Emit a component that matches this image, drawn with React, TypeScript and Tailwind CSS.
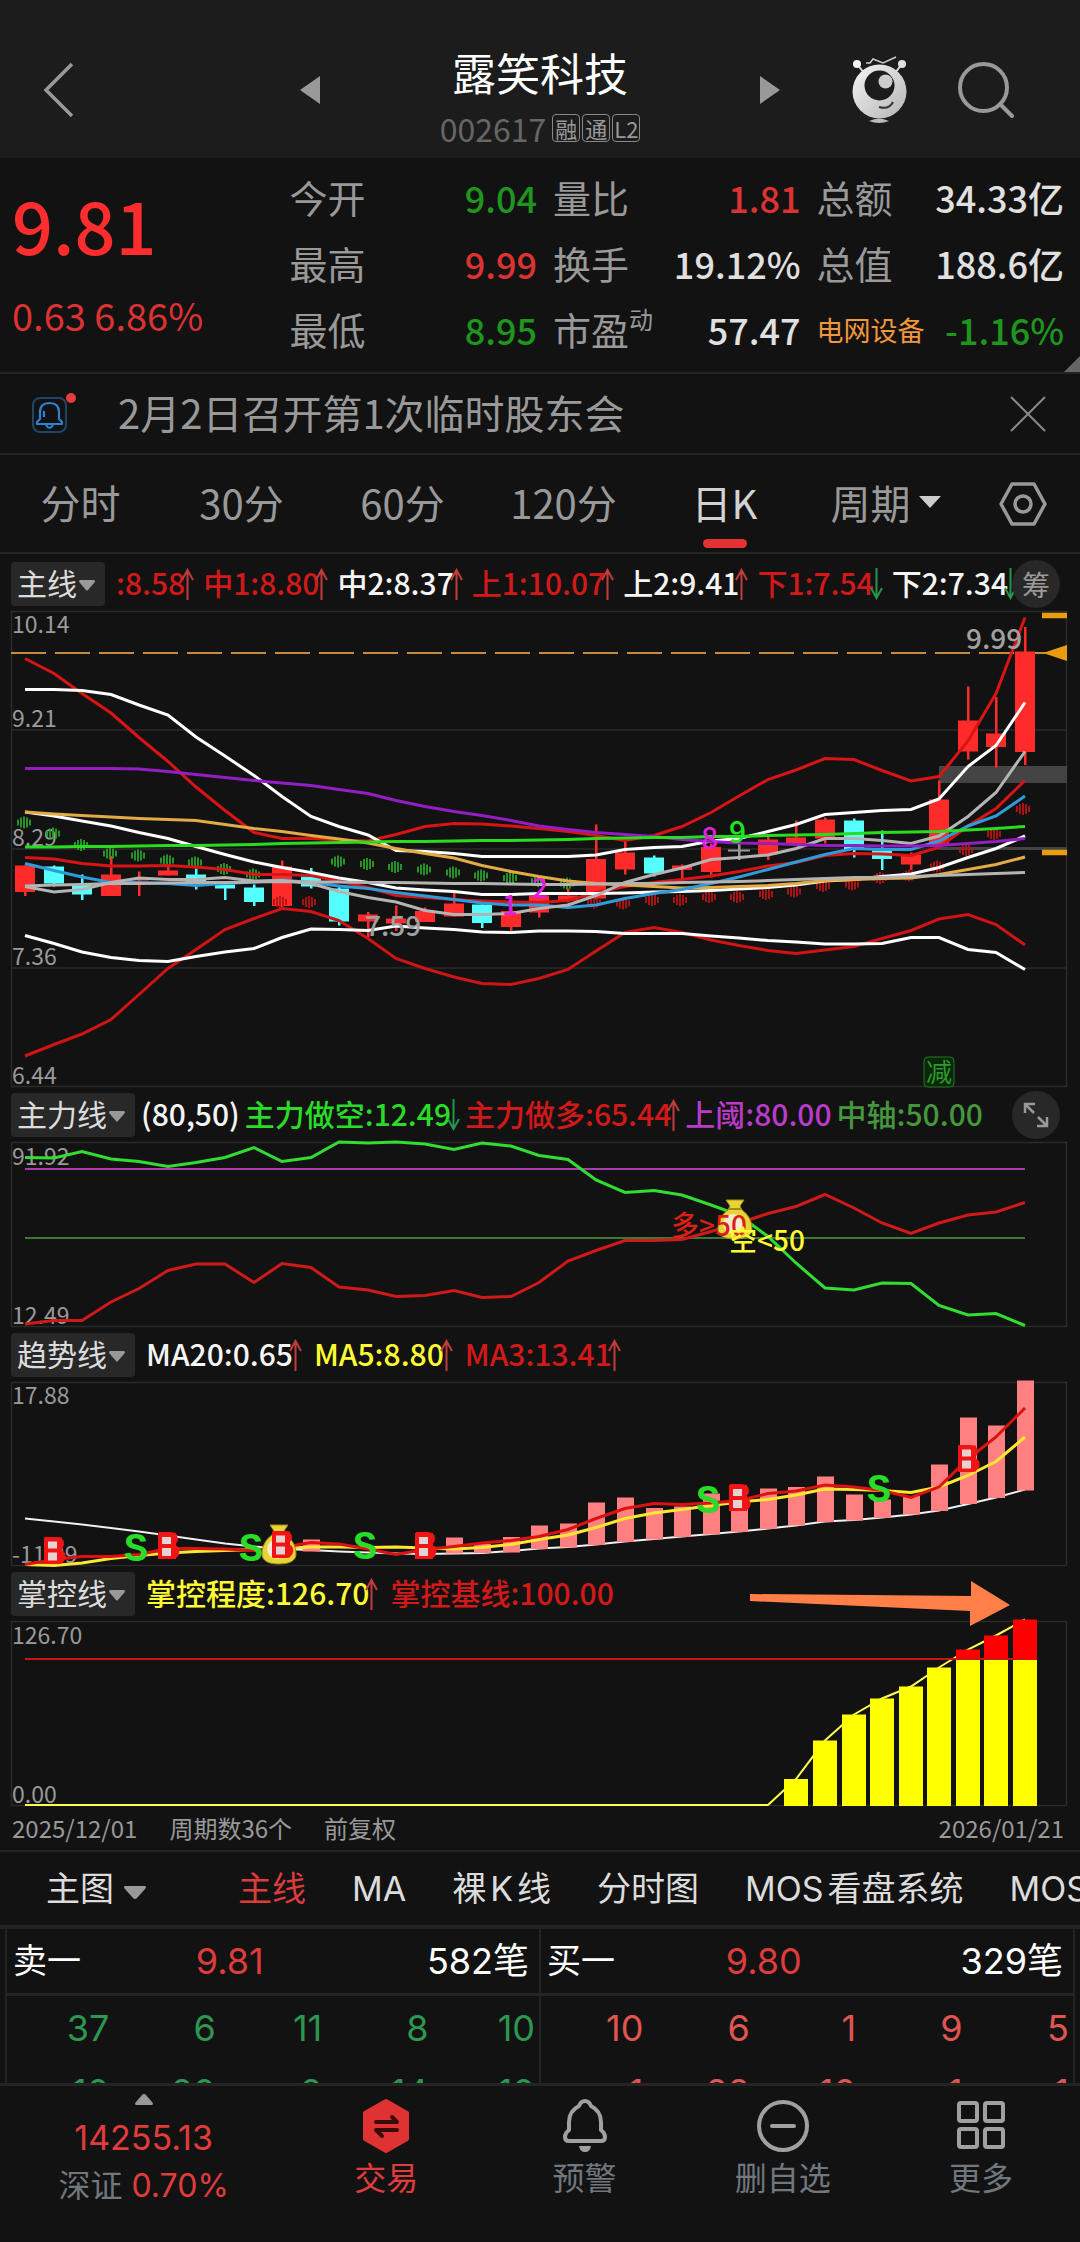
import React from "react";

const FONT = "font-['Noto_Sans_CJK_SC','Noto_Sans',sans-serif]";
const ROUND_FONT = "font-['Inter','Noto_Sans_CJK_SC',sans-serif]";

/* ---------- chart helpers ---------- */

const STEP = 1000 / 35;
const X0 = 14;
const cx = (i: number) => Math.round(X0 + STEP * i);
// Samples are stored at three units per pixel, measured from `base`.
const cy = (v: number, base: number) => Math.round(((v - base) / 3) * 2) / 2;

function Line({ data, base, color, width = 3 }: { data: number[]; base: number; color: string; width?: number }) {
  return (
    <polyline
      points={data.map((v, i) => `${cx(i)},${cy(v, base)}`).join(" ")}
      fill="none"
      stroke={color}
      strokeWidth={width}
    />
  );
}

function Label({ x, y, size = 23, color = "#9a9a9a", children }: { x: number; y: number; size?: number; color?: string; children: React.ReactNode }) {
  return (
    <text x={x} y={y} fontSize={size} fill={color}>
      {children}
    </text>
  );
}

function Plot({ height, label, children }: { height: number; label: string; children: React.ReactNode }) {
  return (
    <div className="pl-[11px] pr-[13px]">
      <svg viewBox={`0 0 1056 ${height}`} className="block w-full overflow-visible" role="img" aria-label={label}>
        <rect x="0.5" y="0.5" width="1055" height={height - 1} fill="none" stroke="#2b2b2b" strokeWidth="1.5" />
        {children}
      </svg>
    </div>
  );
}

/* ---------- main chart data ---------- */

const UPPER_RED = [178, 222, 283, 341, 415, 487, 563, 634, 700, 718, 718, 722, 725, 706, 682, 672, 674, 680, 688, 697, 708, 724, 708, 682, 640, 590, 540, 512, 478, 481, 513, 545, 532, 425, 283, 55];
const UPPER_WHITE = [270, 271, 274, 286, 317, 347, 413, 470, 528, 592, 652, 682, 707, 754, 757, 762, 772, 772, 772, 772, 767, 751, 745, 742, 725, 718, 697, 676, 646, 639, 634, 631, 599, 501, 439, 310];
const PURPLE = [507, 507, 508, 508, 509, 516, 526, 535, 544, 551, 559, 570, 583, 603, 622, 636, 649, 664, 680, 691, 699, 705, 712, 720, 727, 731, 733, 736, 738, 738, 740, 740, 739, 733, 726, 717];
const ORANGE = [638, 644, 649, 653, 657, 660, 664, 675, 688, 697, 708, 719, 731, 748, 762, 776, 799, 816, 832, 845, 852, 857, 861, 866, 865, 862, 859, 853, 843, 840, 838, 836, 825, 811, 796, 773];
const MID_WHITE = [638, 650, 665, 680, 700, 718, 742, 765, 788, 804, 820, 836, 850, 866, 872, 877, 886, 886, 883, 883, 882, 881, 878, 876, 873, 869, 865, 857, 845, 840, 832, 824, 805, 775, 748, 710];
const GREEN = [743, 743, 742, 741, 740, 739, 738, 737, 735, 733, 731, 729, 728, 727, 726, 725, 724, 723, 722, 720, 718, 716, 715, 714, 712, 711, 709, 707, 705, 702, 700, 698, 696, 692, 688, 681];
const GRAY_FLAT = [860, 857, 855, 853, 852, 851, 850, 849, 848, 847, 848, 848, 849, 850, 851, 852, 853, 854, 855, 855, 854, 853, 852, 850, 848, 846, 843, 840, 838, 835, 834, 832, 828, 825, 823, 820];
const GRAY = [862, 878, 870, 850, 836, 840, 840, 835, 845, 843, 853, 877, 894, 908, 934, 945, 945, 943, 927, 917, 888, 850, 825, 806, 780, 775, 767, 748, 717, 718, 724, 732, 710, 652, 580, 457];
const BLUE = [793, 813, 833, 850, 850, 852, 859, 852, 848, 842, 850, 860, 868, 880, 890, 900, 911, 917, 917, 925, 917, 897, 883, 870, 852, 833, 810, 788, 765, 748, 750, 750, 725, 680, 650, 590];
const MID_RED = [774, 779, 793, 800, 800, 799, 803, 811, 826, 826, 828, 845, 865, 889, 895, 900, 905, 908, 910, 904, 880, 862, 850, 840, 830, 817, 800, 790, 768, 763, 764, 769, 745, 680, 628, 543];
const LOWER_WHITE = [1008, 1033, 1058, 1074, 1083, 1087, 1072, 1058, 1047, 1015, 989, 991, 993, 980, 986, 991, 998, 1000, 995, 995, 997, 1003, 1003, 1003, 1010, 1016, 1023, 1028, 1034, 1034, 1033, 1015, 1014, 1051, 1059, 1111];
const LOWER_RED = [1370, 1336, 1304, 1260, 1185, 1108, 1050, 990, 958, 928, 937, 963, 1018, 1077, 1108, 1133, 1152, 1155, 1138, 1111, 1055, 1000, 984, 1000, 1022, 1038, 1054, 1062, 1052, 1042, 1018, 994, 959, 945, 975, 1037];

// [high, body top, body bottom, low, kind]
const CANDLES: [number, number, number, number, "r" | "c" | "d"][] = [
  [798, 798, 878, 890, "r"], [798, 801, 852, 862, "c"], [825, 855, 886, 902, "c"], [770, 825, 890, 890, "r"],
  [817, 837, 844, 890, "r"], [795, 813, 829, 829, "r"], [808, 825, 850, 870, "c"], [848, 855, 867, 902, "c"],
  [855, 864, 908, 920, "c"], [783, 802, 920, 925, "r"], [806, 832, 862, 868, "c"], [862, 867, 966, 978, "c"],
  [938, 945, 967, 1015, "r"], [918, 957, 972, 995, "r"], [925, 935, 968, 968, "r"], [879, 912, 952, 952, "r"],
  [915, 915, 971, 986, "c"], [930, 935, 983, 998, "r"], [880, 888, 940, 955, "r"], [868, 888, 903, 910, "r"],
  [675, 779, 897, 900, "r"], [727, 759, 810, 825, "r"], [768, 774, 822, 832, "c"], [795, 798, 812, 840, "r"],
  [733, 743, 818, 835, "r"], [727, 750, 757, 782, "d"], [705, 720, 766, 782, "r"], [663, 714, 735, 740, "r"],
  [655, 660, 717, 732, "r"], [658, 663, 752, 774, "c"], [693, 754, 779, 812, "c"], [760, 766, 795, 812, "r"],
  [543, 601, 738, 738, "r"], [262, 363, 456, 480, "r"], [293, 402, 443, 504, "r"], [83, 157, 458, 497, "r"],
];
const CANDLE_COLOR = { r: "#ff2a2a", c: "#55ffff", d: "#999999" };

const GREEN_DOTS: [number, number][] = [
  [0, 670], [1, 703], [2, 737], [3, 762], [4, 769], [5, 784], [6, 790], [7, 809], [8, 825],
  [11, 786], [12, 794], [13, 803], [14, 811], [15, 820], [16, 828], [17, 836], [18, 845], [19, 852],
];
const RED_DOTS: [number, number][] = [
  [9, 908], [10, 908], [20, 910], [21, 912], [22, 902], [23, 902], [24, 893], [25, 893], [26, 884], [27, 877],
  [28, 860], [29, 855], [30, 836], [31, 828], [32, 801], [33, 752], [34, 704], [35, 629],
];

function HatchDot({ x, y, color }: { x: number; y: number; color: string }) {
  return (
    <path
      d={`M${x - 6} ${y - 3}v6M${x - 3} ${y - 5}v10M${x} ${y - 6}v12M${x + 3} ${y - 5}v10M${x + 6} ${y - 3}v6`}
      stroke={color}
      strokeWidth="1.8"
    />
  );
}

function MainChart() {
  const b = 35;
  return (
    <Plot height={476} label="日K线图">
      <path d="M0 119H1056M0 238H1056M0 357H1056" stroke="#2b2b2b" strokeWidth="1.5" />
      <rect x="928" y="236" width="128" height="3" fill="#444" />
      <rect x="928" y="155" width="128" height="17" fill="#444" />
      <path d="M0 42H1056" stroke="#c98a3e" strokeWidth="2" strokeDasharray="35 9" />
      <path d="M1032 42L1056 34V50Z" fill="#e89c10" />
      <path d="M1031 4.500H1056M1031 241.500H1056" stroke="#e89c10" strokeWidth="5.500" />
      <Label x={1} y={22}>10.14</Label>
      <Label x={1} y={116}>9.21</Label>
      <Label x={1} y={235}>8.29</Label>
      <Label x={1} y={354}>7.36</Label>
      <Label x={1} y={473}>6.44</Label>
      {CANDLES.map(([h, t, bt, l, k], i) => {
        const half = k === "d" ? 11 : 10;
        return (
          <g key={i} fill={CANDLE_COLOR[k]}>
            <rect x={cx(i) - 1} y={cy(h, b)} width="2.500" height={cy(l, b) - cy(h, b)} />
            <rect x={cx(i) - half} y={cy(t, b)} width={half * 2} height={Math.max(2, cy(bt, b) - cy(t, b))} />
          </g>
        );
      })}
      {GREEN_DOTS.map(([i, v]) => <HatchDot key={i} x={cx(i) - 1} y={cy(v, b)} color="#2aa02a" />)}
      {RED_DOTS.map(([i, v]) => <HatchDot key={i} x={cx(i) - 2} y={cy(v, b)} color="#b81414" />)}
      <Line data={UPPER_RED} base={b} color="#d81414" />
      <Line data={LOWER_RED} base={b} color="#d01414" />
      <Line data={UPPER_WHITE} base={b} color="#ffffff" />
      <Line data={LOWER_WHITE} base={b} color="#ffffff" />
      <Line data={MID_RED} base={b} color="#d81414" />
      <Line data={MID_WHITE} base={b} color="#ffffff" />
      <Line data={ORANGE} base={b} color="#e3ab45" />
      <Line data={BLUE} base={b} color="#2f9bd8" />
      <Line data={GRAY} base={b} color="#b4b4b4" />
      <Line data={GRAY_FLAT} base={b} color="#b4b4b4" />
      <Line data={PURPLE} base={b} color="#931ec4" />
      <Line data={GREEN} base={b} color="#28dc1e" />
      <g fontWeight="500">
        <Label x={955} y={38} size={28} color="#a0a0a0">9.99</Label>
        <Label x={354} y={325} size={28} color="#a0a0a0">7.59</Label>
        <Label x={491} y={304} size={28} color="#e01ee0">1</Label>
        <Label x={521} y={287} size={28} color="#e01ee0">2</Label>
        <Label x={690} y={238} size={30} color="#e01ee0">8</Label>
        <Label x={718} y={232} size={30} color="#1ee61e">9</Label>
      </g>
      <rect x="913" y="446" width="30" height="30" rx="4" fill="#0c260c" stroke="#1f7a1f" />
      <Label x={915} y={471} size={26} color="#2a9a2a">减</Label>
    </Plot>
  );
}

/* ---------- indicator charts ---------- */

const SHORT_POWER = [234, 235, 216, 238, 246, 261, 248, 233, 203, 245, 233, 187, 190, 187, 193, 210, 190, 199, 227, 240, 301, 339, 332, 346, 376, 406, 470, 550, 625, 631, 610, 611, 677, 706, 701, 737];
const LONG_POWER = [733, 723, 723, 667, 626, 572, 553, 553, 609, 552, 563, 622, 631, 650, 648, 633, 654, 650, 608, 544, 512, 483, 483, 479, 456, 430, 402, 381, 345, 385, 430, 461, 430, 406, 397, 368];

function MoneyBag({ x, y }: { x: number; y: number }) {
  return (
    <g>
      <path
        d={`M${x - 9} ${y}h18l-4 6 2 4c7 5 10 12 10 19 0 7-7 10-17 10s-17-3-17-10c0-7 3-14 10-19l2-4Z`}
        fill="#e8d432"
        stroke="#a08a20"
      />
      <ellipse cx={x - 2} cy={y + 24} rx="10" ry="10" fill="#f8ead0" />
      <path d={`M${x - 6} ${y + 9}h12`} stroke="#a08a20" strokeWidth="2" />
    </g>
  );
}

function PowerChart() {
  return (
    <Plot height={185} label="主力线">
      <Label x={1} y={23}>91.92</Label>
      <Label x={1} y={182}>12.49</Label>
      <path d="M14 27H1014" stroke="#a83cb0" strokeWidth="2" />
      <path d="M14 96H1014" stroke="#3c7a34" strokeWidth="2" />
      <Line data={LONG_POWER} base={187} color="#d01919" />
      <Line data={SHORT_POWER} base={187} color="#32dc32" />
      <MoneyBag x={724} y={58} />
      <g fontWeight="500">
        <Label x={660} y={94} size={28} color="#dc1e14">多&gt;50</Label>
        <Label x={718} y={109} size={28} color="#fffa32">空&lt;50</Label>
      </g>
    </Plot>
  );
}

const MA20 = [564, 574, 583, 593, 604, 615, 627, 639, 649, 656, 659, 663, 666, 670, 671, 670, 668, 662, 655, 650, 642, 633, 626, 619, 611, 604, 595, 586, 574, 569, 562, 553, 541, 521, 502, 478];
const MA5 = [703, 705, 698, 684, 675, 668, 663, 660, 657, 655, 650, 650, 652, 650, 653, 656, 652, 642, 628, 614, 592, 565, 548, 538, 526, 515, 508, 494, 476, 478, 480, 486, 470, 436, 393, 320];
const MA3 = [703, 688, 679, 679, 672, 654, 654, 656, 660, 652, 636, 641, 656, 672, 658, 648, 638, 630, 618, 597, 565, 535, 520, 523, 518, 510, 490, 482, 464, 470, 480, 501, 470, 386, 320, 233];
const TREND_BARS: [number, number, number][] = [
  [10, 628, 663], [15, 621, 670], [16, 640, 668], [17, 620, 666], [18, 586, 656], [19, 580, 651], [20, 516, 644],
  [21, 502, 635], [22, 533, 627], [23, 528, 620], [24, 490, 612], [25, 505, 605], [26, 475, 596], [27, 470, 586],
  [28, 438, 575], [29, 492, 570], [30, 507, 563], [31, 497, 553], [32, 402, 542], [33, 262, 521], [34, 286, 503],
  [35, 151, 480],
];
const BUYS: [number, number][] = [[1, 660], [5, 647], [9, 642], [14, 647], [25, 503], [33, 385]];
const SELLS: [number, number][] = [[4, 653], [8, 651], [12, 646], [24, 509], [30, 476]];

function TrendChart() {
  const b = 155;
  return (
    <Plot height={184} label="趋势线">
      <Label x={1} y={22}>17.88</Label>
      <Label x={1} y={181}>-11.39</Label>
      <Line data={MA20} base={b} color="#f0f0f0" width={2} />
      {TREND_BARS.map(([i, t, bt]) => (
        <rect key={i} x={cx(i) - 8} y={cy(t, b)} width="17" height={cy(bt, b) - cy(t, b)} fill="#ff8080" />
      ))}
      <Line data={MA5} base={b} color="#ffe632" />
      <Line data={MA3} base={b} color="#dc1212" />
      <MoneyBag x={268} y={143} />
      <g fontFamily="'Liberation Mono', monospace" fontWeight="700" fontSize="40" textAnchor="middle">
        {SELLS.map(([i, v]) => (
          <text key={i} x={cx(i) - 3} y={cy(v, b) + 13} fill="#28dc28">S</text>
        ))}
        {BUYS.map(([i, v]) => (
          <g key={i}>
            <rect x={cx(i) - 10} y={cy(v, b) - 13} width="18" height="26" fill="#f01414" />
            <text x={cx(i)} y={cy(v, b) + 13} fill="#f01414">B</text>
            <path d={`M${cx(i) - 6} ${cy(v, b) - 9}h9v7h-9ZM${cx(i) - 6} ${cy(v, b) + 2}h9v8h-9Z`} fill="#e6d2d2" />
          </g>
        ))}
      </g>
    </Plot>
  );
}

const CONTROL_TOPS = [626, 510, 432, 384, 348, 292, 238, 195, 148];

function ControlChart() {
  const b = 152;
  const points = ["14,184", `${cx(26)},184`, ...CONTROL_TOPS.map((v, k) => `${cx(27 + k)},${cy(v, b)}`)].join(" ");
  return (
    <Plot height={185} label="掌控线">
      <Label x={1} y={23}>126.70</Label>
      <Label x={1} y={182}>0.00</Label>
      <polyline points={points} fill="none" stroke="#ffff50" strokeWidth="2" />
      {CONTROL_TOPS.map((v, k) => {
        const top = cy(v, b);
        const y = Math.max(top, 39);
        return (
          <g key={k}>
            <rect x={cx(27 + k) - 12} y={y} width="24" height={185 - y} fill="#ffff00" />
            {top < 39 && <rect x={cx(27 + k) - 12} y={top} width="24" height={39 - top} fill="#ff0000" />}
          </g>
        );
      })}
      <path d="M14 38H1014" stroke="#c81414" strokeWidth="2" />
      <path d="M739 -27L960 -25V-40L999 -16L959 5V-10L739 -20Z" fill="#ff7f48" />
    </Plot>
  );
}

/* ---------- legends ---------- */

type Item = { text: string; color: string; arrow?: "up" | "down" };

function Arrow({ dir }: { dir: "up" | "down" }) {
  return (
    <svg viewBox="0 0 13 32" className="-ml-1 mt-1 h-8 w-[13px] shrink-0" fill="none" strokeWidth="2" aria-hidden="true">
      {dir === "up" ? <path d="M6.500 32V2M1 12L6.500 2L12 12" stroke="#c03c3c" /> : <path d="M6.500 0V30M1 20L6.500 30L12 20" stroke="#23964b" />}
    </svg>
  );
}

function Legend({ name, items, gap = "gap-3", children }: { name: string; items: Item[]; gap?: string; children?: React.ReactNode }) {
  return (
    <div className="relative flex h-[55px] items-center pl-[11px] text-[30px] leading-none">
      <button className="flex h-11 shrink-0 items-center rounded bg-[#282828] pb-1 pl-1.5 pr-2.5 text-[#dcdcdc]">
        {name}
        <svg viewBox="0 0 16 11" className="ml-0.5 mt-2 h-[11px] w-4" fill="#999" aria-hidden="true">
          <path d="M1 0H15Q17 1 15 3L9 10Q8 11 7 10L1 3Q-1 1 1 0Z" />
        </svg>
      </button>
      <div className={`flex min-w-0 flex-1 items-center overflow-hidden whitespace-nowrap pb-1 leading-[44px] ${gap} ${name === "主力线" ? "pl-1.5" : "pl-[11px]"}`}>
        {items.map((it) => (
          <span key={it.text} className={`flex items-center font-medium ${it.color}`}>
            {it.text}
            {it.arrow && <Arrow dir={it.arrow} />}
          </span>
        ))}
      </div>
      {children}
    </div>
  );
}

const RED = "text-[#d21919]";
const WHITE = "text-[#f5f5f5]";

/* ---------- header ---------- */

function Header() {
  return (
    <header className="grid h-[158px] grid-cols-[300fr_480fr_300fr] items-center bg-[#1c1c1c] pt-[22px]">
      <button aria-label="返回" className="w-min pl-[42px]">
        <svg viewBox="0 0 32 56" className="h-14 w-8" fill="none" stroke="#999" strokeWidth="3.500">
          <path d="M30 2L4 28L30 54" />
        </svg>
      </button>
      <div className="flex items-center justify-between">
        <button aria-label="上一只">
          <svg viewBox="0 0 20 28" className="h-7 w-5" fill="#999"><path d="M20 0V28L0 14Z" /></svg>
        </button>
        <div className="flex flex-col items-center pt-2.5">
          <h1 className="text-[44px] leading-[52px] text-white">露笑科技</h1>
          <div className="mt-3.5 flex items-center gap-0.5 text-[22px] leading-none text-[#999]">
            <span className="mr-1 text-[32px] text-[#666]">002617</span>
            <span className="flex size-7 items-center justify-center rounded-sm border border-[#888]">融</span>
            <span className="flex size-7 items-center justify-center rounded-sm border border-[#888]">通</span>
            <span className="flex size-7 items-center justify-center rounded-sm border border-[#888]">L2</span>
          </div>
        </div>
        <button aria-label="下一只">
          <svg viewBox="0 0 20 28" className="h-7 w-5" fill="#999"><path d="M0 0V28L20 14Z" /></svg>
        </button>
      </div>
      <div className="flex items-center gap-[50px] pl-[72px]">
        <button aria-label="助手">
          <svg viewBox="0 0 56 68" className="h-[68px] w-14" aria-hidden="true">
            <defs>
              <linearGradient id="body" x1="0" y1="0" x2="1" y2="1">
                <stop offset="0" stopColor="#f5f5f5" />
                <stop offset="1" stopColor="#b4b4b4" />
              </linearGradient>
            </defs>
            <path d="M5 8L12 17M50 8L43 17" stroke="#ddd" strokeWidth="2" />
            <circle cx="5" cy="8" r="4" fill="#f5f5f5" />
            <circle cx="50" cy="8" r="4" fill="#e0e0e0" />
            <path d="M14 7H18L21 3L31 7L44 1" fill="none" stroke="#ccc" strokeWidth="1.500" />
            <circle cx="27.500" cy="35.500" r="27" fill="url(#body)" />
            <circle cx="27.500" cy="29.500" r="15" fill="#1c1c1c" />
            <circle cx="33.500" cy="25.500" r="7" fill="#ccc" />
            <path d="M27 51Q37 54 41 46" fill="none" stroke="#333" strokeWidth="2" />
            <path d="M17 65Q27 60 37 65Q27 69 17 65Z" fill="#bbb" />
          </svg>
        </button>
        <button aria-label="搜索">
          <svg viewBox="0 0 56 56" className="size-14" fill="none" stroke="#999" strokeWidth="4" strokeLinecap="round">
            <circle cx="25.500" cy="25.500" r="23.500" />
            <path d="M42 42L54 54" />
          </svg>
        </button>
      </div>
    </header>
  );
}

function Stat({ label, sup, value, color, small }: { label: string; sup?: string; value: string; color: string; small?: boolean }) {
  return (
    <div className="flex h-[66px] items-center justify-between whitespace-nowrap">
      <dt className={small ? "text-[27px] text-[#f0963c]" : "text-[38px] text-[#999]"}>
        {label}
        {sup && <sup className="relative -top-4 align-middle text-[24px]">{sup}</sup>}
      </dt>
      <dd className={`text-[36px] font-medium ${color}`}>{value}</dd>
    </div>
  );
}

const UP = "text-[#dc3232]";
const DOWN = "text-[#1e961e]";
const PLAIN = "text-[#e0e0e0]";

function Quote() {
  return (
    <section className="relative flex h-[216px] border-b-2 border-[#242424] pl-3 pr-4 pt-1.5 leading-none">
      <div className="flex-[278] pt-6">
        <div className="text-[72px] font-medium leading-[72px] text-[#ff2d2d]">9.81</div>
        <div className="mt-9 text-[38px] text-[#dc3232]">0.63 6.86%</div>
      </div>
      <dl className="grid flex-[776] grid-cols-3 content-start gap-x-4">
        <Stat label="今开" value="9.04" color={DOWN} />
        <Stat label="量比" value="1.81" color={UP} />
        <Stat label="总额" value="34.33亿" color={PLAIN} />
        <Stat label="最高" value="9.99" color={UP} />
        <Stat label="换手" value="19.12%" color={PLAIN} />
        <Stat label="总值" value="188.6亿" color={PLAIN} />
        <Stat label="最低" value="8.95" color={DOWN} />
        <Stat label="市盈" sup="动" value="57.47" color={PLAIN} />
        <Stat label="电网设备" value="-1.16%" color={DOWN} small />
      </dl>
      <svg viewBox="0 0 16 16" className="absolute bottom-0 right-0 size-4" fill="#666" aria-hidden="true"><path d="M16 0V16H0Z" /></svg>
    </section>
  );
}

function Notice() {
  return (
    <section className="flex h-[81px] items-center border-b-2 border-[#242424] pl-8 pr-[34px]">
      <svg viewBox="0 0 44 44" className="size-11 shrink-0" fill="none" aria-hidden="true">
        <rect x="1" y="6" width="33" height="34" rx="7" stroke="#1f4668" strokeWidth="2" />
        <path d="M5 32H30V30L27 27V20Q27 11 17.500 11Q8 11 8 20V27L5 30ZM12 19V25M14 33Q17.500 39 21 33" stroke="#2d82d2" strokeWidth="2.200" strokeLinejoin="round" />
        <circle cx="39" cy="6" r="5" fill="#e63c3c" />
      </svg>
      <p className="ml-[42px] flex-1 pb-1 text-[40px] leading-none text-[#999]">2月2日召开第1次临时股东会</p>
      <button aria-label="关闭">
        <svg viewBox="0 0 36 36" className="size-9" stroke="#888" strokeWidth="2"><path d="M1 1L35 35M35 1L1 35" /></svg>
      </button>
    </section>
  );
}

function PeriodTabs() {
  return (
    <nav className="flex h-[99px] items-stretch border-b-2 border-[#242424] text-[40px] leading-none text-[#999]">
      {["分时", "30分", "60分", "120分", "日K", "周期"].map((t) => (
        <button key={t} className={`relative flex flex-[161] items-center justify-center pb-1 ${t === "日K" ? "text-[#d2d2d2]" : ""}`}>
          {t}
          {t === "周期" && <svg viewBox="0 0 22 12" className="ml-2 h-3 w-[22px]" fill="#ccc" aria-hidden="true"><path d="M0 0H22L11 12Z" /></svg>}
          {t === "日K" && <span className="absolute bottom-1 left-1/2 h-[9px] w-11 -translate-x-1/2 rounded-full bg-[#e43232]" />}
        </button>
      ))}
      <button aria-label="设置" className="flex flex-[114] items-center justify-center">
        <svg viewBox="0 0 48 44" className="h-11 w-12" fill="none" stroke="#999" strokeWidth="3.500" strokeLinejoin="round">
          <path d="M13 2H35L46 22L35 42H13L2 22Z" />
          <circle cx="24" cy="22" r="8" />
        </svg>
      </button>
    </nav>
  );
}

/* ---------- lower sections ---------- */

function ChartSelector() {
  return (
    <nav className={`flex h-[77px] items-center gap-[46px] overflow-hidden whitespace-nowrap border-b-4 border-[#242424] pl-[46px] text-[34px] leading-[48px] text-[#dcdcdc] ${ROUND_FONT}`}>
      <button className="flex items-center gap-2.5">
        主图
        <svg viewBox="0 0 22 13" className="mt-2 h-[13px] w-[22px]" fill="#999" aria-hidden="true">
          <path d="M1 0H21Q23 1 21 3L13 12Q11 14 9 12L1 3Q-1 1 1 0Z" />
        </svg>
      </button>
      <span className="h-10 w-0.5 bg-[#2a2a2a]" />
      <button className="text-[#dc3c3c]">主线</button>
      <button>MA</button>
      <button>裸<span className="mx-1">K</span>线</button>
      <button>分时图</button>
      <button><span className="mr-1">MOS</span>看盘系统</button>
      <button>MOS</button>
    </nav>
  );
}

function BookSide({ name, price, count, rows, color }: { name: string; price: string; count: string; rows: string[][]; color: string }) {
  return (
    <div className="min-w-0 flex-1 border-l-2 border-[#242424]">
      <div className="grid h-[67px] grid-cols-[26fr_32fr_42fr] items-center border-b-[3px] border-[#242424] pl-1.5 pr-2.5 text-[34px] text-white">
        <span>{name}</span>
        <span className="text-center text-[36px] text-[#dc3c3c]">{price}</span>
        <span className="text-right text-[36px]">{count}</span>
      </div>
      <table className={`w-full table-fixed text-[36px] ${color}`}>
        <tbody>
          {rows.map((r, i) => (
            <tr key={i} className="h-16">
              {r.map((v, j) => <td key={j} className="p-0 pr-1 text-right">{v}</td>)}
            </tr>
          ))}
        </tbody>
      </table>
    </div>
  );
}

function OrderBook() {
  return (
    <section className={`flex h-[154px] overflow-hidden pl-[5px] leading-none ${ROUND_FONT}`}>
      <BookSide name="卖一" price="9.81" count="582笔" color="text-[#2d9650]" rows={[["37", "6", "11", "8", "10"], ["10", "20", "2", "14", "10"]]} />
      <BookSide name="买一" price="9.80" count="329笔" color="text-[#e15550]" rows={[["10", "6", "1", "9", "5"], ["1", "22", "10", "1", "1"]]} />
      <div className="w-[7px] border-l-2 border-[#242424]" />
    </section>
  );
}

function NavItem({ label, active, children }: { label: string; active?: boolean; children: React.ReactNode }) {
  return (
    <button className={`flex flex-[198] flex-col items-center gap-2.5 pt-[11px] ${active ? "text-[#e03c3c]" : "text-[#70777d]"}`}>
      <svg viewBox="0 0 56 56" className="size-14" fill="none" stroke="#a0a0a0" strokeWidth="4" strokeLinecap="round" strokeLinejoin="round" aria-hidden="true">
        {children}
      </svg>
      <span className="leading-[32px]">{label}</span>
    </button>
  );
}

function BottomNav() {
  return (
    <nav className={`flex h-40 items-start border-t-[3px] border-[#242424] text-[32px] leading-none ${ROUND_FONT}`}>
      <button className="flex flex-[287] flex-col items-center pt-2">
        <svg viewBox="0 0 18 11" className="h-[11px] w-[18px]" fill="#999" aria-hidden="true"><path d="M1 11H17Q19 10 17 8L11 1Q9 -1 7 1L1 8Q-1 10 1 11Z" /></svg>
        <span className="mt-[15px] text-[34px] leading-9 text-[#e03c3c]">14255.13</span>
        <span className="mt-3 leading-9 text-[#70777d]">深证 <span className="text-[#e03c3c]">0.70%</span></span>
      </button>
      <NavItem label="交易" active>
        <path d="M28 4L49 16V42L28 54L7 42V16Z" fill="#e03232" stroke="#e03232" strokeWidth="4" />
        <path d="M18 25H39L34 20M39 33H18L24 39" stroke="#3a0a0a" />
      </NavItem>
      <NavItem label="预警">
        <path d="M28 4Q32 4 34 9Q44 14 44 25V33Q48 36 48 40Q48 44 44 44H12Q8 44 8 40Q8 36 12 33V25Q12 14 22 9Q24 4 28 4Z" />
        <path d="M22 49H34Q33 55 28 55Q23 55 22 49Z" fill="#a0a0a0" stroke="none" />
      </NavItem>
      <NavItem label="删自选">
        <circle cx="28" cy="29" r="24" />
        <path d="M17 29H39" />
      </NavItem>
      <NavItem label="更多">
        <rect x="6" y="6" width="18" height="18" rx="2" />
        <rect x="32" y="6" width="18" height="18" rx="2" />
        <rect x="6" y="32" width="18" height="18" rx="2" />
        <rect x="32" y="32" width="18" height="18" rx="2" />
      </NavItem>
    </nav>
  );
}

export default function App() {
  return (
    <main className={`w-full overflow-hidden bg-[#121212] ${FONT}`}>
      <Header />
      <Quote />
      <Notice />
      <PeriodTabs />
      <section className="border-b-2 border-[#242424] pt-0.5">
        <Legend
          name="主线"
          gap="gap-[9px]"
          items={[
            { text: ":8.58", color: RED, arrow: "up" },
            { text: "中1:8.80", color: RED, arrow: "up" },
            { text: "中2:8.37", color: WHITE, arrow: "up" },
            { text: "上1:10.07", color: RED, arrow: "up" },
            { text: "上2:9.41", color: WHITE, arrow: "up" },
            { text: "下1:7.54", color: RED, arrow: "down" },
            { text: "下2:7.34", color: WHITE, arrow: "down" },
          ]}
        >
          <button className="absolute right-5 top-1 flex size-12 items-center justify-center rounded-full bg-[#282828] text-[28px] text-[#999]">筹</button>
        </Legend>
        <MainChart />
        <Legend
          name="主力线"
          gap="gap-[5px]"
          items={[
            { text: "(80,50)", color: WHITE },
            { text: "主力做空:12.49", color: "text-[#28dc28]", arrow: "down" },
            { text: "主力做多:65.44", color: RED, arrow: "up" },
            { text: "上阈:80.00", color: "text-[#b93cc8]" },
            { text: "中轴:50.00", color: "text-[#46963c]" },
          ]}
        >
          <button aria-label="全屏" className="absolute right-5 top-1 flex size-12 items-center justify-center rounded-full bg-[#282828]">
            <svg viewBox="0 0 26 26" className="size-[26px]" fill="none" stroke="#999" strokeWidth="2.500">
              <path d="M2 11V2H12M2 2L11 11M24 15V24H14M24 24L15 15" />
            </svg>
          </button>
        </Legend>
        <PowerChart />
        <Legend
          name="趋势线"
          items={[
            { text: "MA20:0.65", color: WHITE, arrow: "up" },
            { text: "MA5:8.80", color: "text-[#fffa32]", arrow: "up" },
            { text: "MA3:13.41", color: RED, arrow: "up" },
          ]}
        />
        <TrendChart />
        <Legend
          name="掌控线"
          items={[
            { text: "掌控程度:126.70", color: "text-[#fffa32]", arrow: "up" },
            { text: "掌控基线:100.00", color: RED },
          ]}
        />
        <ControlChart />
        <div className="flex h-11 items-center gap-8 px-3 pr-4 text-[24px] leading-none text-[#999]">
          <span>2025/12/01</span>
          <span>周期数36个</span>
          <span>前复权</span>
          <span className="ml-auto">2026/01/21</span>
        </div>
      </section>
      <ChartSelector />
      <OrderBook />
      <BottomNav />
    </main>
  );
}
